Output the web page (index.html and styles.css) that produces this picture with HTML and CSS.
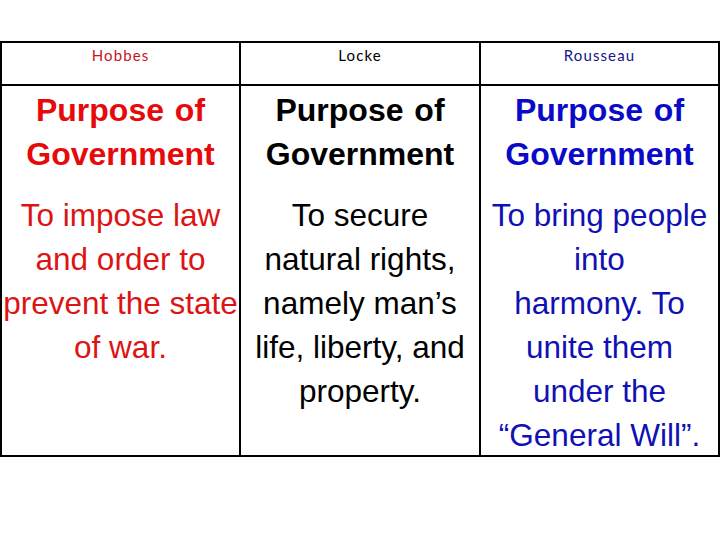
FILE: index.html
```html
<!DOCTYPE html>
<html>
<head>
<meta charset="utf-8">
<link rel="stylesheet" href="styles.css">
</head>
<body>
<div class="table">
  <div class="head red-dark">Hobbes</div>
  <div class="head mid">Locke</div>
  <div class="head blue-dark">Rousseau</div>

  <div class="cell red">
    <div class="title">Purpose of<br>Government</div>
    <div class="text">To impose law<br>and order to<br>prevent the state<br>of war.</div>
  </div>
  <div class="cell black mid">
    <div class="title">Purpose of<br>Government</div>
    <div class="text">To secure<br>natural rights,<br>namely man’s<br>life, liberty, and<br>property.</div>
  </div>
  <div class="cell blue">
    <div class="title">Purpose of<br>Government</div>
    <div class="text">To bring people<br>into<br>harmony. To<br>unite them<br>under the<br>“General Will”.</div>
  </div>
</div>
</body>
</html>
```

FILE: styles.css
```css
html, body {
  margin: 0;
  padding: 0;
  background: #ffffff;
}
body {
  width: 720px;
  height: 540px;
  overflow: hidden;
  padding-top: 41px;
  box-sizing: border-box;
  font-family: "Liberation Sans", Arial, sans-serif;
}
.table {
  display: grid;
  grid-template-columns: 239px 240px 239px;
  grid-template-rows: 43px 371px;
  width: 720px;
  box-sizing: border-box;
  border-top: 2px solid #000;
  border-left: 2px solid #000;
}
.head, .cell {
  box-sizing: border-box;
  border-right: 2px solid #000;
  border-bottom: 2px solid #000;
  text-align: center;
  white-space: nowrap;
}
.head {
  font-family: Lato, "Open Sans", sans-serif;
  font-size: 15px;
  letter-spacing: 1.1px;
  line-height: 18px;
  padding-top: 3px;
  color: #000;
}
.red-dark { color: #c8141c; }
.blue-dark { color: #14148c; }
.cell {
  padding-top: 2px;
  overflow: visible;
}
.title {
  font-size: 32px;
  font-weight: bold;
  line-height: 44px;
  word-spacing: 2px;
}
.text {
  margin-top: 17px;
  font-size: 31.5px;
  line-height: 44px;
  height: 264px;
}
.red { color: #e60a0a; }
.red .text { color: #dc1414; }
.black { color: #000; }
.blue { color: #0a0ac8; }
.blue .text { color: #1010b4; }
```
